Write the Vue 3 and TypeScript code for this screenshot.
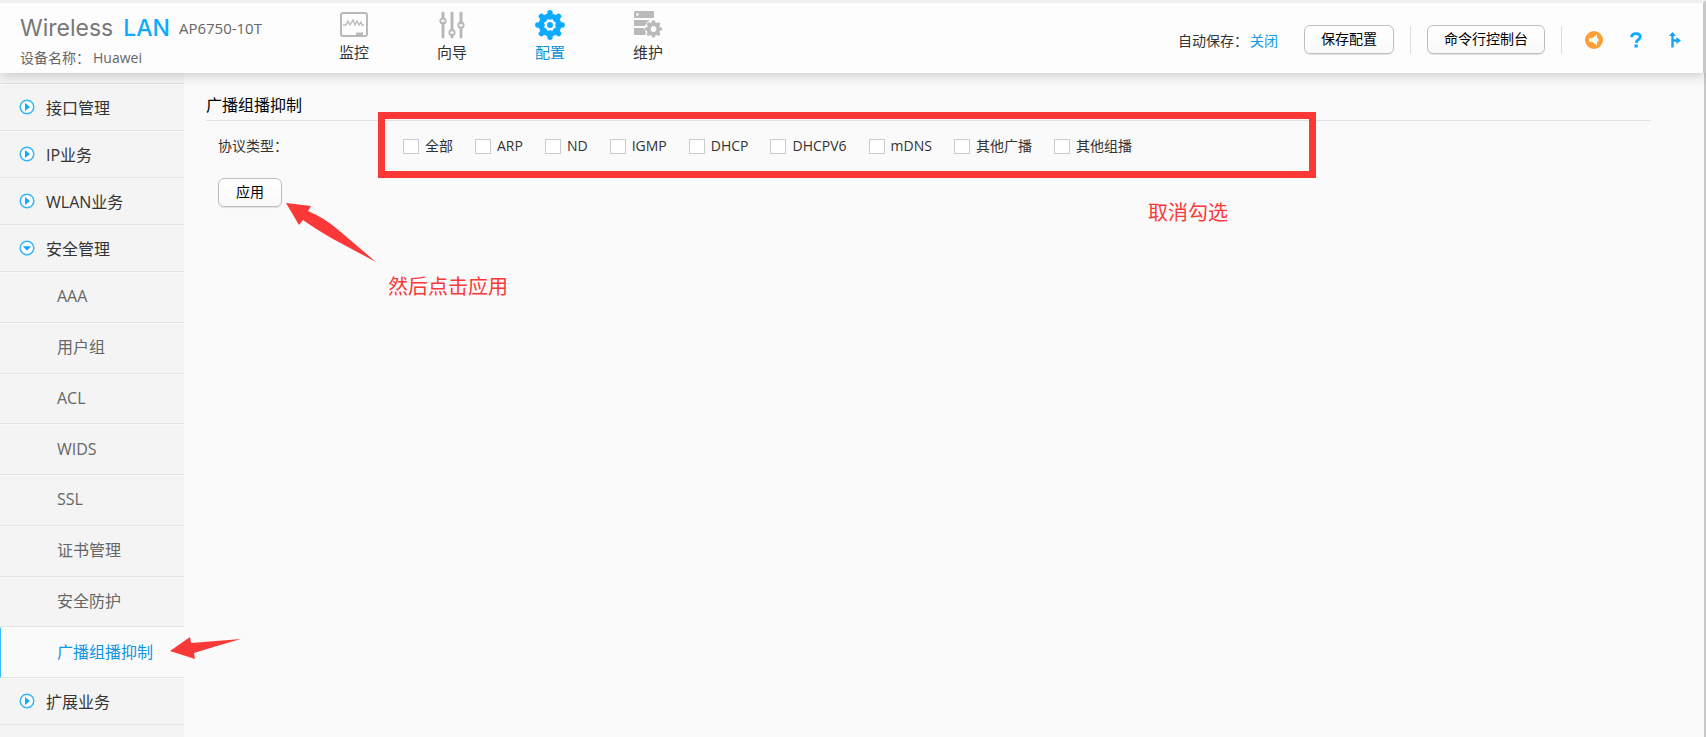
<script setup lang="ts">
import { ref } from 'vue'

interface NavItem {
  id: 'monitor' | 'wizard' | 'config' | 'maintain'
  label: string
}

interface Protocol {
  id: string
  label: string
  checked: boolean
}

const navItems: NavItem[] = [
  { id: 'monitor', label: '监控' },
  { id: 'wizard', label: '向导' },
  { id: 'config', label: '配置' },
  { id: 'maintain', label: '维护' },
]
const activeNav = ref<NavItem['id']>('config')

const groupsAbove = ['接口管理', 'IP业务', 'WLAN业务']
const securityItems = ['AAA', '用户组', 'ACL', 'WIDS', 'SSL', '证书管理', '安全防护', '广播组播抑制']
const activeItem = ref('广播组播抑制')

const protocols = ref<Protocol[]>([
  { id: 'all', label: '全部', checked: false },
  { id: 'arp', label: 'ARP', checked: false },
  { id: 'nd', label: 'ND', checked: false },
  { id: 'igmp', label: 'IGMP', checked: false },
  { id: 'dhcp', label: 'DHCP', checked: false },
  { id: 'dhcpv6', label: 'DHCPV6', checked: false },
  { id: 'mdns', label: 'mDNS', checked: false },
  { id: 'broadcast', label: '其他广播', checked: false },
  { id: 'multicast', label: '其他组播', checked: false },
])

const teeth = [0, 45, 90, 135, 180, 225, 270, 315]
</script>

<template>
  <div class="page">
    <header class="header">
      <div class="brand">
        <div class="brand-row">
          <span class="logo"><span>Wireless</span><b>LAN</b></span>
          <span class="model">AP6750-10T</span>
        </div>
        <div class="device"><span>设备名称：</span><span>Huawei</span></div>
      </div>

      <nav class="nav">
        <a
          v-for="item in navItems"
          :key="item.id"
          href="#"
          class="nav-item"
          :class="{ active: item.id === activeNav }"
          @click.prevent="activeNav = item.id"
        >
          <svg v-if="item.id === 'monitor'" class="nav-icon" viewBox="0 0 30 30" fill="none" stroke="currentColor">
            <rect x="2" y="3" width="26" height="23" rx="2" stroke-width="2" />
            <path d="M4 15h3l2-4 2 4 3-5 2 5 2-4 2 4 2-3 1 3h2" stroke-width="1.3" />
            <path d="M17 22.5h7v3h-7z" fill="currentColor" stroke="none" />
          </svg>
          <svg v-else-if="item.id === 'wizard'" class="nav-icon" viewBox="0 0 30 30" fill="none" stroke="currentColor">
            <path d="M6 3v5M6 13v14M15 3v17M15 25v2M24 3v10M24 18v9" stroke-width="3" stroke-linecap="round" />
            <circle cx="6" cy="11" r="2.7" stroke-width="1.8" />
            <circle cx="15" cy="22.5" r="2.7" stroke-width="1.8" />
            <circle cx="24" cy="15" r="2.7" stroke-width="1.8" />
          </svg>
          <svg v-else-if="item.id === 'config'" class="nav-icon" viewBox="0 0 30 30" fill="none" stroke="currentColor">
            <path
              v-for="a in teeth"
              :key="a"
              d="M15 2.8V7"
              stroke-width="5.4"
              stroke-linecap="round"
              :transform="`rotate(${a} 15 15)`"
            />
            <circle cx="15" cy="15" r="8.8" stroke-width="5.2" />
            <circle cx="15" cy="15" r="3" fill="currentColor" stroke="none" />
          </svg>
          <svg v-else class="nav-icon" viewBox="0 0 30 30" fill="none" stroke="currentColor">
            <path
              d="M2 1h18a1 1 0 0 1 1 1v6H1V2a1 1 0 0 1 1-1zM1 10h16l-3 2-2 4H1zM1 18h10l2 5-1 2H2a1 1 0 0 1-1-1z"
              fill="currentColor"
              stroke="none"
            />
            <circle cx="4.500" cy="4.500" r="1.300" fill="#fdfdfd" stroke="none" />
            <circle cx="20.5" cy="19" r="8.5" fill="#fdfdfd" stroke="none" />
            <path
              v-for="a in teeth"
              :key="a"
              d="M20.5 12v2.5"
              stroke-width="3.6"
              stroke-linecap="round"
              :transform="`rotate(${a} 20.5 19)`"
            />
            <circle cx="20.5" cy="19" r="5" stroke-width="3.4" />
          </svg>
          <span>{{ item.label }}</span>
        </a>
      </nav>

      <div class="tools">
        <span class="autosave"><span>自动保存：</span><a href="#">关闭</a></span>
        <button type="button" class="btn">保存配置</button>
        <span class="sep"></span>
        <button type="button" class="btn">命令行控制台</button>
        <span class="sep"></span>
        <div class="tool-icons">
          <a href="#" aria-label="公告">
            <svg width="18" height="18" viewBox="0 0 18 18">
              <circle cx="9" cy="9" r="9" fill="#ff9f33" />
              <path d="M4 7.200H7L12 3.500v3.600l1.600.6v2.600l-1.600.6v3.600L7 10.800H4z" fill="#fff" />
            </svg>
          </a>
          <a href="#" aria-label="帮助">
            <svg width="12" height="16" viewBox="0 0 12 16" fill="none" stroke="#0cabff">
              <path d="M1.700 5.200C1.700 2.700 3.500 1.600 6 1.600c2.600 0 4.300 1.200 4.300 3.200 0 2.900-3.800 2.700-4.100 6" stroke-width="2.800" />
              <path d="M6.100 12.500v3" stroke-width="3.400" />
            </svg>
          </a>
          <a href="#" aria-label="退出">
            <svg width="12" height="16" viewBox="0 0 12 16" fill="none" stroke="#16a4ee">
              <path d="M3.500 2v13.500M3.500 8.500h5" stroke-width="2.400" />
              <path d="M3.500 0l3.500 4H0zM7.500 5l4.500 3.500-4.500 3.500z" fill="#16a4ee" stroke="none" />
            </svg>
          </a>
        </div>
      </div>
    </header>

    <div class="body">
      <aside class="sidebar">
        <a v-for="g in groupsAbove" :key="g" href="#" class="group">
          <svg class="group-icon" viewBox="0 0 16 16">
            <circle cx="8" cy="8" r="6.800" fill="#fff" stroke="#35b5fb" stroke-width="1.500" />
            <path d="M6 4L11 8 6 12z" fill="#14a7fa" />
          </svg>
          {{ g }}
        </a>
        <a href="#" class="group">
          <svg class="group-icon" viewBox="0 0 16 16">
            <circle cx="8" cy="8" r="6.800" fill="#fff" stroke="#35b5fb" stroke-width="1.500" />
            <path d="M3.800 6.300h8.400L8 10.800z" fill="#14a7fa" />
          </svg>
          安全管理
        </a>
        <div class="sublist">
          <a
            v-for="s in securityItems"
            :key="s"
            href="#"
            class="sub"
            :class="{ active: s === activeItem }"
            @click.prevent="activeItem = s"
            >{{ s }}</a
          >
        </div>
        <a href="#" class="group">
          <svg class="group-icon" viewBox="0 0 16 16">
            <circle cx="8" cy="8" r="6.800" fill="#fff" stroke="#35b5fb" stroke-width="1.500" />
            <path d="M6 4L11 8 6 12z" fill="#14a7fa" />
          </svg>
          扩展业务
        </a>
      </aside>

      <main class="main">
        <h1 class="title">广播组播抑制</h1>
        <form class="form" @submit.prevent>
          <fieldset class="field">
            <legend class="field-label">协议类型：</legend>
            <div class="checks">
              <label v-for="p in protocols" :key="p.id" class="check" :for="p.id">
                <input :id="p.id" v-model="p.checked" type="checkbox" />
                <span>{{ p.label }}</span>
              </label>
            </div>
          </fieldset>
          <button type="submit" class="btn">应用</button>
        </form>
      </main>
    </div>

    <!-- Guide marks laid over the page -->
    <div class="mark frame"></div>
    <div class="mark note note-uncheck">取消勾选</div>
    <div class="mark note note-apply">然后点击应用</div>
    <svg class="mark arrow-apply" width="92" height="60" viewBox="0 0 92 60" aria-hidden="true">
      <path d="M0 0l25 3-3 5Q38 15 50 25L90 59 47 36Q28 25 17 17l-4 5z" fill="#fb3838" />
    </svg>
    <svg class="mark arrow-menu" width="71" height="23" viewBox="0 0 71 23" aria-hidden="true">
      <path d="M0 14L20 0l1 6 50-4Q46 9 24 16l1 6z" fill="#fb3838" />
    </svg>
  </div>
</template>

<style>
html,
body {
  margin: 0;
  background: #fafafa;
}
</style>

<style scoped>
.page {
  position: relative;
  display: flex;
  flex-direction: column;
  min-height: 100vh;
  overflow: hidden;
  font-family: 'Open Sans', 'Noto Sans CJK SC', sans-serif;
  font-size: 14px;
  line-height: 20px;
  color: #333;
}

a {
  color: inherit;
  text-decoration: none;
}

.header {
  position: relative;
  z-index: 1;
  display: flex;
  align-items: stretch;
  box-sizing: border-box;
  height: 73px;
  border-top: 3px solid #f0f0f0;
  border-right: 3px solid #c8c8c8;
  background: #fdfdfd;
  box-shadow: 0 2px 12px rgba(0, 0, 0, 0.2);
}

.brand {
  width: 305px;
  padding: 9px 0 0 20px;
  box-sizing: border-box;
  color: #666;
}

.brand-row {
  display: flex;
  align-items: center;
  gap: 9px;
  height: 32px;
}

.logo {
  display: flex;
  gap: 10px;
  font-family: Inter, sans-serif;
  font-size: 23px;
  line-height: 32px;
  color: #777;
  white-space: nowrap;
}

.logo b {
  font-weight: 500;
  color: #0cabff;
}

.model {
  font-size: 15px;
}

.device {
  display: flex;
  gap: 3px;
  padding-top: 4px;
}

.nav {
  display: flex;
}

.nav-item {
  display: flex;
  flex-direction: column;
  align-items: center;
  gap: 2px;
  width: 98px;
  padding-top: 7px;
  font-size: 15px;
}

.nav-icon {
  width: 30px;
  height: 30px;
  color: #b9b9b9;
}

.nav-item.active {
  color: #0d8fdc;
}

.nav-item.active .nav-icon {
  color: #0cabff;
}

.tools {
  display: flex;
  align-items: center;
  gap: 16px;
  margin-left: auto;
  padding: 3px 22px 0 0;
}

.autosave {
  display: flex;
  gap: 2px;
  padding-top: 2px;
  margin-right: 10px;
}

.autosave a {
  color: #1296e6;
}

.btn {
  box-sizing: border-box;
  height: 29px;
  padding: 0 16px 2px;
  border: 1px solid #bfbfbf;
  border-radius: 6px;
  background: linear-gradient(#fff, #f9f9f9);
  box-shadow: 0 1px 1px rgba(0, 0, 0, 0.1);
  font: inherit;
  color: #000;
}

.sep {
  width: 1px;
  height: 28px;
  background: #ddd;
}

.tool-icons {
  display: flex;
  align-items: center;
  gap: 27px;
  margin-left: 7px;
}

.tool-icons a {
  display: flex;
}

.body {
  display: flex;
  flex: 1;
  border-right: 2px solid #c8c8c8;
}

.sidebar {
  box-sizing: border-box;
  width: 184px;
  padding-top: 10px;
  background: #f4f4f4;
}

.sidebar::before {
  content: '';
  display: block;
  height: 1px;
  background: #e2e2e2;
}

.group,
.sub {
  display: flex;
  align-items: center;
  box-sizing: border-box;
  border-top: 1px solid #fafafa;
  border-bottom: 1px solid #e4e4e4;
  font-size: 16px;
}

.group {
  gap: 11px;
  height: 47px;
  padding-left: 19px;
}

.group-icon {
  width: 16px;
  height: 16px;
  margin-bottom: 2px;
}

.sublist {
  display: grid;
  grid-auto-rows: 1fr;
  min-height: 406px;
}

.sub {
  padding: 0 0 2px 56px;
  border-left: 1px solid transparent;
  color: #666;
}

.sub.active {
  border-left-color: #42bcfb;
  background: #fafafa;
  color: #0b95e6;
}

.main {
  flex: 1;
  padding: 20px 53px 0 22px;
}

.title {
  margin: 0;
  padding-bottom: 3px;
  border-bottom: 1px solid #e2e2e2;
  font-size: 16px;
  font-weight: 400;
  line-height: 24px;
  color: #000;
}

.form {
  padding: 15px 0 0 12px;
}

.form .btn {
  padding: 0 17px 2px;
}

.field {
  display: flex;
  margin: 0 0 22px;
  padding: 0;
  border: 0;
}

.field-label {
  float: left;
  width: 185px;
  padding: 0;
}

.checks {
  display: flex;
  gap: 22px;
}

.check {
  display: flex;
  align-items: center;
  gap: 6px;
}

.check input {
  appearance: none;
  box-sizing: border-box;
  width: 16px;
  height: 15px;
  margin: 0;
  border: 1px solid #ccc;
  background: #fff;
}

.check input:checked {
  background: #0cabff;
}

.mark {
  position: absolute;
  z-index: 2;
  pointer-events: none;
}

.frame {
  left: 378px;
  top: 112px;
  box-sizing: border-box;
  width: 938px;
  height: 66px;
  border: 7px solid #fb3838;
}

.note {
  font-size: 20px;
  line-height: 28px;
  color: #fb3838;
}

.note-uncheck {
  left: 1148px;
  top: 199px;
}

.note-apply {
  left: 388px;
  top: 273px;
}

.arrow-apply {
  left: 286px;
  top: 203px;
}

.arrow-menu {
  left: 170px;
  top: 637px;
}
</style>
